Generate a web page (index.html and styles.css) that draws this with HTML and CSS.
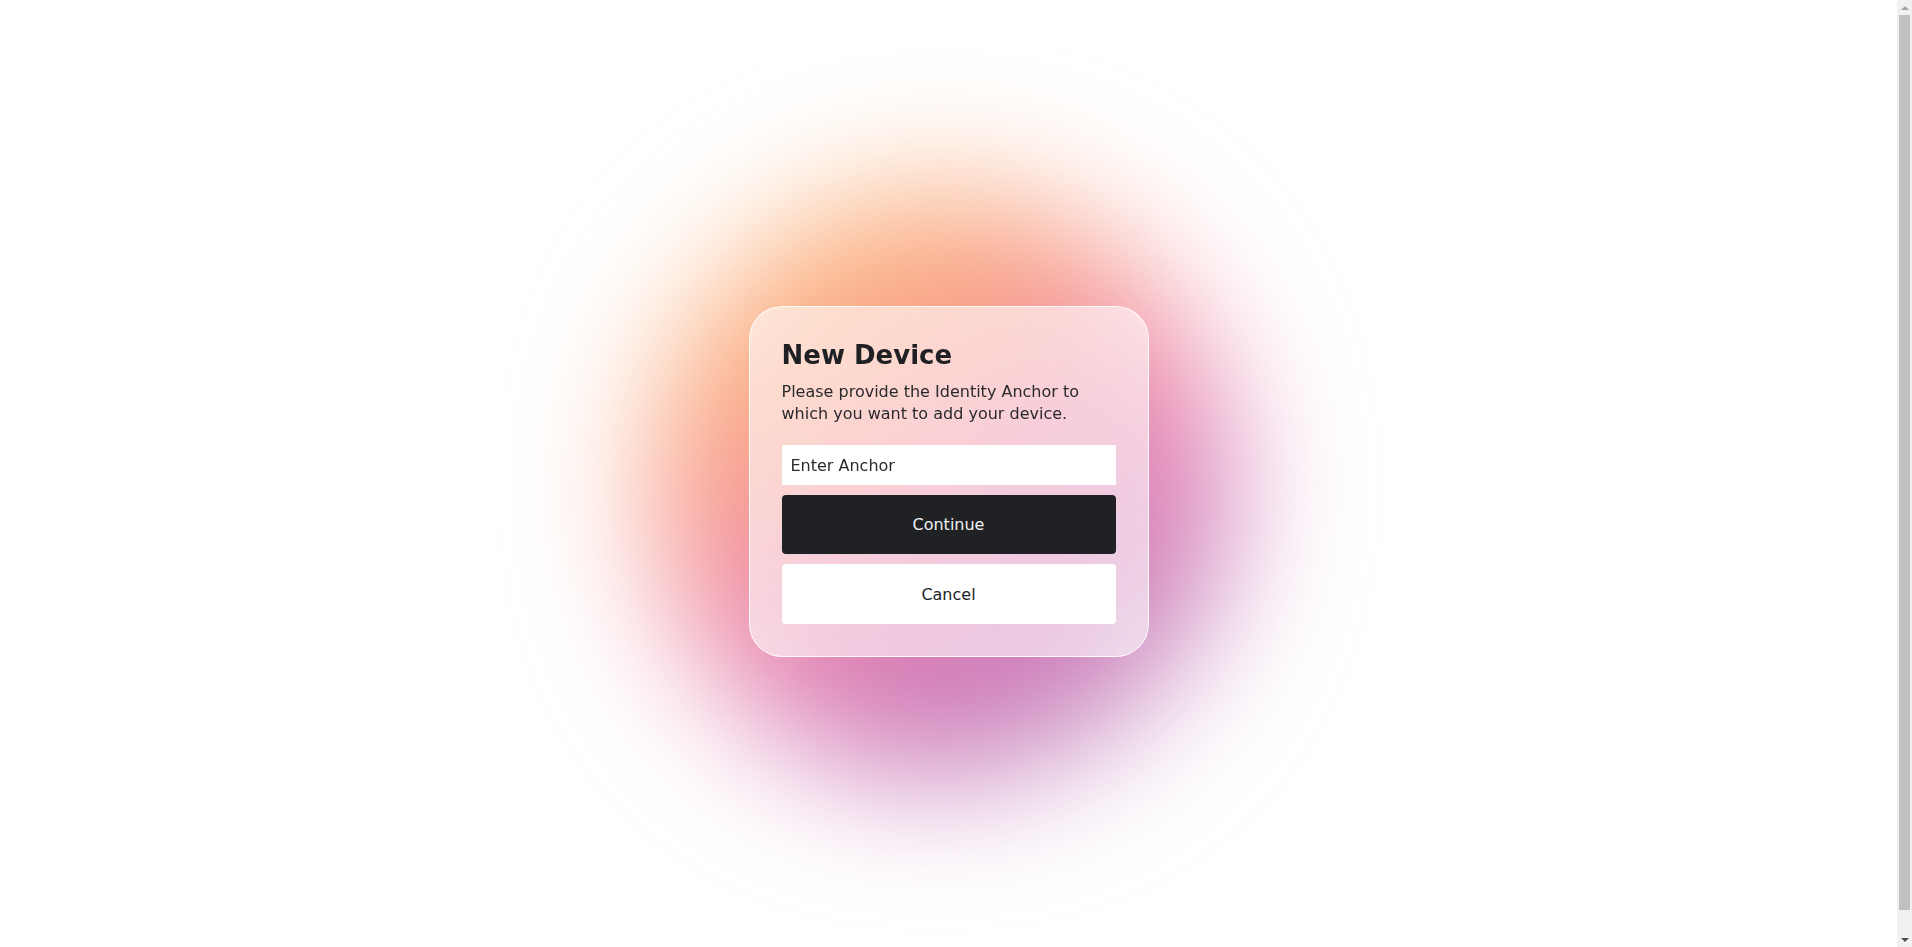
FILE: index.html
```html
<!DOCTYPE html>
<html lang="en">
<head>
<meta charset="utf-8">
<title>New Device</title>
<link rel="stylesheet" href="styles.css">
</head>
<body>
<div class="window">
  <div class="viewport">
    <main class="stage">
      <div class="blob" aria-hidden="true"></div>
      <section class="card">
        <h1 class="title">New Device</h1>
        <p class="lead">Please provide the Identity Anchor to which you want to add your device.</p>
        <input class="anchor-input" type="text" placeholder="Enter Anchor">
        <button class="btn btn-primary" type="button">Continue</button>
        <button class="btn btn-secondary" type="button">Cancel</button>
      </section>
    </main>
  </div>
  <div class="scrollbar" aria-hidden="true">
    <div class="sb-arrow"><span class="tri-up"></span></div>
    <div class="sb-track"><div class="sb-thumb"></div></div>
    <div class="sb-arrow"><span class="tri-down"></span></div>
  </div>
</div>
</body>
</html>
```

FILE: styles.css
```css
html, body {
  margin: 0;
  height: 100%;
  background: #ffffff;
  overflow: hidden;
}

body {
  font-family: "DejaVu Sans", "Noto Sans", sans-serif;
  color: #202124;
}

.window {
  display: flex;
  height: 100vh;
}

.viewport {
  flex: 1;
  min-width: 0;
  height: 100vh;
  overflow: hidden;
}

.stage {
  position: relative;
  margin: 8px;
  height: 100vh;
  display: flex;
  align-items: center;
  justify-content: center;
}

.blob {
  position: absolute;
  left: 50%;
  top: 50%;
  width: 580px;
  height: 590px;
  margin-left: -300px;
  margin-top: -292px;
  border-radius: 50%;
  background: linear-gradient(148deg, #fdc486 0%, #fbb07c 22%, #f89a8c 38%, #ef8aa8 50%, #dc7cb6 62%, #c87ab8 76%, #b8a0cc 100%);
  filter: blur(66px);
}

.card {
  position: relative;
  width: 334px;
  padding: 32px;
  border-radius: 33px;
  border: 1px solid rgba(255, 255, 255, 0.85);
  background: rgba(255, 255, 255, 0.58);
  backdrop-filter: blur(20px);
  display: flex;
  flex-direction: column;
}

.title {
  margin: 0;
  font-size: 26px;
  font-weight: 700;
  line-height: 32px;
  color: #1f2024;
}

.lead {
  margin: 10px 0 20px;
  font-size: 16px;
  line-height: 22px;
  color: #2a2a2e;
}

.anchor-input {
  box-sizing: border-box;
  height: 40px;
  width: 100%;
  margin: 0;
  border: none;
  border-radius: 0;
  padding: 0 9px;
  font-family: inherit;
  font-size: 16px;
  color: #222;
  background: #fff;
  outline: none;
}

.anchor-input::placeholder {
  color: #2b2b2f;
  opacity: 1;
}

.btn {
  box-sizing: border-box;
  width: 100%;
  margin: 10px 0 0;
  border-radius: 4px;
  font-family: inherit;
  font-size: 16px;
  cursor: pointer;
}

.btn-primary {
  height: 59px;
  border: none;
  background: #202125;
  color: #f1f1f1;
}

.btn-secondary {
  height: 60px;
  border: none;
  background: #ffffff;
  color: #222226;
}

/* scrollbar */
.scrollbar {
  width: 15px;
  flex: none;
  height: 100vh;
  background: #f1f1f1;
  display: flex;
  flex-direction: column;
}

.sb-arrow {
  height: 15px;
  flex: none;
  display: flex;
  align-items: center;
  justify-content: center;
}

.tri-up {
  width: 0;
  height: 0;
  border-left: 4px solid transparent;
  border-right: 4px solid transparent;
  border-bottom: 4px solid #a3a3a3;
}

.tri-down {
  width: 0;
  height: 0;
  border-left: 4px solid transparent;
  border-right: 4px solid transparent;
  border-top: 4px solid #505050;
}

.sb-track {
  flex: 1;
  padding: 0 2px 22px;
  display: flex;
  flex-direction: column;
}

.sb-thumb {
  flex: 1;
  background: #c1c1c1;
}
```
